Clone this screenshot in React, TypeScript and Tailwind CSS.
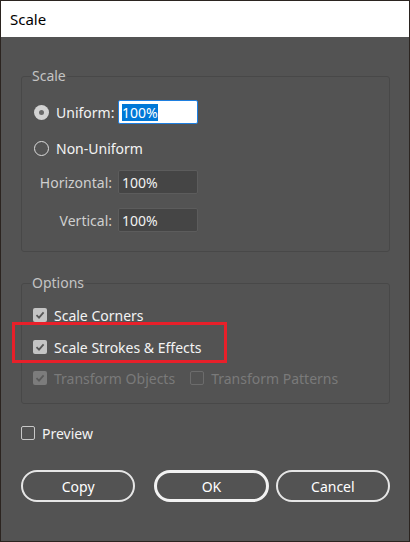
import React from "react";

const font = { fontFamily: '"Noto Sans", "Open Sans", sans-serif' };

function Radio({ checked }: { checked?: boolean }) {
  return checked ? (
    <span className="flex h-[15px] w-[15px] shrink-0 items-center justify-center rounded-full bg-[#d2d2d2]">
      <span className="h-[5px] w-[5px] rounded-full bg-[#6a6a6a]" />
    </span>
  ) : (
    <span className="block h-[15px] w-[15px] shrink-0 rounded-full border-[1.5px] border-[#dcdcdc]" />
  );
}

function Check({ checked, disabled }: { checked?: boolean; disabled?: boolean }) {
  if (!checked) {
    return (
      <span
        className={
          "block h-[14px] w-[14px] shrink-0 rounded-[2px] border " +
          (disabled ? "border-[#6c6c6c]" : "border-[#c8c8c8]")
        }
      />
    );
  }
  return (
    <span
      className={
        "flex h-[14px] w-[14px] shrink-0 items-center justify-center rounded-[2px] " +
        (disabled ? "bg-[#7c7c7c]" : "bg-[#c4c4c4]")
      }
    >
      <svg width="10" height="10" viewBox="0 0 10 10">
        <path
          d="M1.5 5.2 L4 7.6 L8.6 2.4"
          fill="none"
          stroke={disabled ? "#5a5a5a" : "#575757"}
          strokeWidth="1.8"
        />
      </svg>
    </span>
  );
}

function Field({ value }: { value: string }) {
  return (
    <div className="flex h-[24px] w-[80px] shrink-0 items-center rounded-[2px] border border-[#5c5c5c] bg-[#454545] px-[3px] text-[14px] text-[#f2f2f2]">
      {value}
    </div>
  );
}

export default function App() {
  return (
    <div
      className="relative h-[542px] w-[410px] overflow-hidden border border-[#2b2420] bg-[#535353]"
      style={font}
    >
      <div className="flex h-[36px] items-center bg-white pl-[9px] text-[15px] text-black">
        Scale
      </div>

      <div className="pl-[20px] pr-[19px] pt-[29px]">
        <fieldset className="rounded-[3px] border border-[#484848] pb-[19px] pl-[12px]">
          <legend className="ml-[-3px] px-[1px] text-[14px] leading-[20px] text-[#c4c4c4]">
            Scale
          </legend>
          <div className="mt-[14px] flex h-[24px] items-center">
            <Radio checked />
            <span className="ml-[7px] w-[62px] text-[14px] text-[#f4f4f4]">Uniform:</span>
            <div className="flex h-[24px] w-[80px] shrink-0 items-center rounded-[2px] border border-[#1e7fe0] bg-white px-[3px]">
              <span className="bg-[#0078d7] text-[14px] leading-[17px] text-white">100%</span>
            </div>
          </div>
          <div className="mt-[12px] flex h-[24px] items-center">
            <Radio />
            <span className="ml-[7px] text-[14px] text-[#f4f4f4]">Non-Uniform</span>
          </div>
          <div className="mt-[10px] flex h-[24px] items-center">
            <span className="w-[84px] shrink-0 pr-[6px] text-right text-[14px] text-[#cfcfcf]">
              Horizontal:
            </span>
            <Field value="100%" />
          </div>
          <div className="mt-[14px] flex h-[24px] items-center">
            <span className="w-[84px] shrink-0 pr-[6px] text-right text-[14px] text-[#cfcfcf]">
              Vertical:
            </span>
            <Field value="100%" />
          </div>
        </fieldset>

        <fieldset className="mt-[21px] rounded-[3px] border border-[#484848] pb-[15px] pl-[11px]">
          <legend className="ml-[-2px] px-[1px] text-[14px] leading-[20px] text-[#c4c4c4]">
            Options
          </legend>
          <div className="mt-[12px] flex h-[20px] items-center">
            <Check checked />
            <span className="ml-[7px] text-[14px] text-[#f4f4f4]">Scale Corners</span>
          </div>
          <div className="mt-[12px] flex h-[20px] items-center">
            <Check checked />
            <span className="ml-[7px] text-[14px] text-[#f4f4f4]">Scale Strokes &amp; Effects</span>
          </div>
          <div className="mt-[11px] flex h-[20px] items-center">
            <Check checked disabled />
            <span className="ml-[7px] text-[14px] text-[#7a7a7a]">Transform Objects</span>
            <span className="ml-[15px] flex">
              <Check disabled />
            </span>
            <span className="ml-[7px] text-[14px] text-[#7a7a7a]">Transform Patterns</span>
          </div>
        </fieldset>

        <div className="mt-[19px] flex h-[20px] items-center">
          <Check />
          <span className="ml-[7px] text-[14px] text-[#f4f4f4]">Preview</span>
        </div>

        <div className="mt-[27px] flex">
          <button className="h-[32px] w-[115px] rounded-full border-2 border-[#e6e6e6] text-[14px] text-white">
            Copy
          </button>
          <button className="ml-[19px] h-[32px] w-[115px] rounded-full border-[3px] border-[#f2f2f2] text-[14px] text-white">
            OK
          </button>
          <button className="ml-[7px] h-[32px] w-[115px] rounded-full border-2 border-[#e6e6e6] text-[14px] text-white">
            Cancel
          </button>
        </div>
      </div>

      <div className="absolute left-[11px] top-[321px] h-[41px] w-[215px] border-[3px] border-[#e8202a]" />
    </div>
  );
}
